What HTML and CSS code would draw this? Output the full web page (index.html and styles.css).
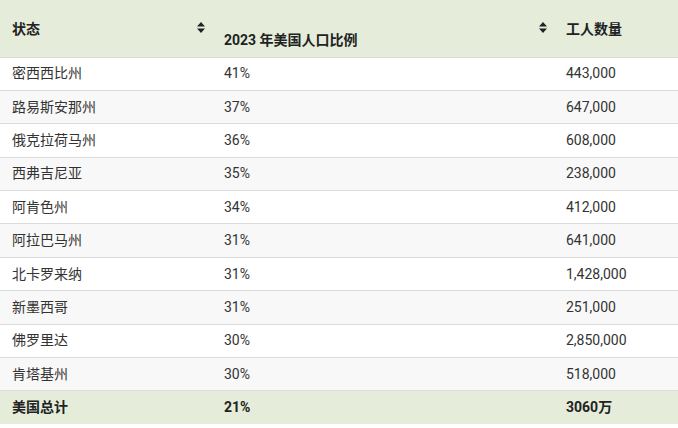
FILE: index.html
```html
<!DOCTYPE html>
<html lang="zh">
<head>
<meta charset="utf-8">
<link rel="stylesheet" href="styles.css">
</head>
<body>
<table class="data">
  <colgroup>
    <col class="c1"><col class="c2"><col class="c3">
  </colgroup>
  <thead>
    <tr>
      <th class="sortable top">状态<span class="sort"><svg width="8" height="11" viewBox="0 0 8 11"><path d="M4 0L8 4.4H0Z M4 11L0 6.6H8Z" fill="#222"/></svg></span></th>
      <th class="sortable low">2023 年美国人口比例<span class="sort"><svg width="8" height="11" viewBox="0 0 8 11"><path d="M4 0L8 4.4H0Z M4 11L0 6.6H8Z" fill="#222"/></svg></span></th>
      <th class="top">工人数量</th>
    </tr>
  </thead>
  <tbody>
    <tr><td>密西西比州</td><td>41%</td><td>443,000</td></tr>
    <tr><td>路易斯安那州</td><td>37%</td><td>647,000</td></tr>
    <tr><td>俄克拉荷马州</td><td>36%</td><td>608,000</td></tr>
    <tr><td>西弗吉尼亚</td><td>35%</td><td>238,000</td></tr>
    <tr><td>阿肯色州</td><td>34%</td><td>412,000</td></tr>
    <tr><td>阿拉巴马州</td><td>31%</td><td>641,000</td></tr>
    <tr><td>北卡罗来纳</td><td>31%</td><td>1,428,000</td></tr>
    <tr><td>新墨西哥</td><td>31%</td><td>251,000</td></tr>
    <tr><td>佛罗里达</td><td>30%</td><td>2,850,000</td></tr>
    <tr><td>肯塔基州</td><td>30%</td><td>518,000</td></tr>
  </tbody>
  <tfoot>
    <tr><td>美国总计</td><td>21%</td><td>3060万</td></tr>
  </tfoot>
</table>
</body>
</html>
```
FILE: styles.css
```css
html, body {
  margin: 0;
  padding: 0;
  background: #fff;
}
body {
  font-family: Roboto, "Noto Sans CJK SC", sans-serif;
  font-size: 14px;
  color: #333;
}
.data {
  width: 678px;
  border-collapse: collapse;
  table-layout: fixed;
}
.c1 { width: 212px; }
.c2 { width: 342px; }
.c3 { width: 124px; }

.data th {
  background: #e5edda;
  color: #222;
  font-weight: bold;
  text-align: left;
  height: 57px;
  padding: 0 12px;
  box-sizing: border-box;
  position: relative;
  border-bottom: 1px solid #d8dcd2;
}
.data th.top { vertical-align: middle; padding-top: 0; padding-bottom: 0; }
.data th.low { vertical-align: bottom; padding-bottom: 8px; }
.sort {
  position: absolute;
  right: 7px;
  top: 22px;
  line-height: 0;
}
.data td {
  height: 33.4px;
  padding: 0 12px;
  box-sizing: border-box;
  border-bottom: 1px solid #dcdcdc;
  vertical-align: middle;
  line-height: 17px;
}
.data tbody tr:nth-child(even) td { background: #f8f8f8; }
.data tfoot td {
  background: #e5edda;
  font-weight: bold;
  color: #222;
  border-bottom: none;
}
```
